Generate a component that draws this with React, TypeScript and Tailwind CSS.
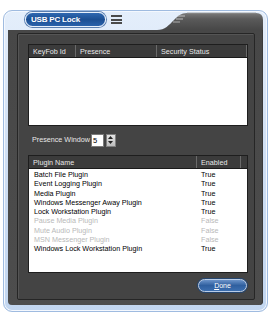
import React from "react";

const font = { fontFamily: '"Liberation Sans", Arial, sans-serif' };

function Header({ cols }: { cols: { label: string; w: string }[] }) {
  return (
    <div className="flex h-[13px] bg-[#3b3b3b] border-b border-[#1a1a1a]">
      {cols.map((c, i) => (
        <div
          key={i}
          className={`${c.w} h-full border-r border-[#6a6a6a] text-[#e8e8e8] text-[7.2px] leading-[13px] pl-[4px] whitespace-nowrap overflow-hidden`}
        >
          {c.label}
        </div>
      ))}
      <div className="flex-1 h-full" />
    </div>
  );
}

const plugins: [string, string, boolean][] = [
  ["Batch File Plugin", "True", true],
  ["Event Logging Plugin", "True", true],
  ["Media Plugin", "True", true],
  ["Windows Messenger Away Plugin", "True", true],
  ["Lock Workstation Plugin", "True", true],
  ["Pause Media Plugin", "False", false],
  ["Mute Audio Plugin", "False", false],
  ["MSN Messenger Plugin", "False", false],
  ["Windows Lock Workstation Plugin", "True", true],
];

export default function App() {
  return (
    <div className="w-[271px] h-[320px] bg-white pt-[10px] pl-[3px]" style={font}>
      <div className="w-[265px] h-[302px] rounded-[9px] border border-[#9fbbe0] bg-gradient-to-b from-[#e4eefb] via-[#cfdff4] to-[#c2d6f0] px-[4px] pb-[6px] flex flex-col shadow-[inset_0_0_0_1px_#f4f8fe]">
        {/* title row */}
        <div className="h-[19px] flex items-start shrink-0">
          <div className="ml-[17px] mt-[1px] w-[81px] h-[15px] rounded-full border border-[#e8f0fb] bg-gradient-to-b from-[#2f68b1] via-[#1c4f93] to-[#2a62ab] shadow-[0_0_0_1px_#5b7fb0] flex items-center pl-[5px]">
            <span className="text-white font-bold text-[8px] leading-none tracking-[-0.2px]">USB PC Lock</span>
          </div>
          <div className="ml-[5px] mt-[4px] flex flex-col gap-[1.5px]">
            <div className="w-[11px] h-[2px] bg-[#4a4a4a]" />
            <div className="w-[11px] h-[2px] bg-[#4a4a4a]" />
            <div className="w-[11px] h-[2px] bg-[#4a4a4a]" />
          </div>
          <div className="flex-1" />
          <svg width="106" height="19" viewBox="0 0 106 19" className="block">
            <defs>
              <linearGradient id="tab" x1="0" y1="0" x2="0" y2="1">
                <stop offset="0" stopColor="#7a7a7a" />
                <stop offset="0.35" stopColor="#5a5a5a" />
                <stop offset="1" stopColor="#474747" />
              </linearGradient>
            </defs>
            <path d="M0 19 C8 19 12 14 17 9 C21 5 24 2 30 2 L99 2 Q106 2 106 9 L106 19 Z" fill="url(#tab)" />
            <path d="M30 2 L99 2" stroke="#9a9a9a" strokeWidth="0.8" />
            <line x1="21" y1="5" x2="28" y2="5" stroke="#c8c8c8" strokeWidth="0.9" />
            <line x1="19" y1="8" x2="26" y2="8" stroke="#c8c8c8" strokeWidth="0.9" />
            <line x1="16" y1="11" x2="23" y2="11" stroke="#b8b8b8" strokeWidth="0.9" />
          </svg>
        </div>
        {/* dark panel */}
        <div className="flex-1 bg-gradient-to-b from-[#474747] to-[#4d4d4d] rounded-b-[4px] pt-[3px] pl-[9px] shadow-[inset_-1px_0_0_#3a3a3a]">
          <div className="w-[238px] h-[267px] border border-[#262626] bg-[#444444] rounded-[2px] pt-[10px] pl-[10px] flex flex-col shadow-[inset_1px_1px_0_#555]">
            {/* table 1 */}
            <div className="w-[220px] border border-[#1e1e1e]">
              <Header
                cols={[
                  { label: "KeyFob Id", w: "w-[47px]" },
                  { label: "Presence", w: "w-[81px]" },
                  { label: "Security Status", w: "w-[90px]" },
                ]}
              />
              <div className="h-[67px] bg-white" />
            </div>
            {/* presence window */}
            <div className="mt-[7px] h-[14px] flex items-center">
              <span className="pl-[4px] text-[7.2px] text-[#e8e8e8] leading-none">Presence Window</span>
              <div className="ml-[1px] w-[13px] h-[13px] bg-white border border-[#7a7a7a] text-[7.5px] leading-[11px] pl-[1px] text-black">5</div>
              <div className="ml-[2px] w-[10px] h-[13px] bg-gradient-to-b from-[#e4e4e4] to-[#bdbdbd] border border-[#808080] flex flex-col items-center justify-center gap-[2px]">
                <svg width="5" height="3" viewBox="0 0 5 3"><path d="M0 3 L2.5 0 L5 3 Z" fill="#222" /></svg>
                <svg width="5" height="3" viewBox="0 0 5 3"><path d="M0 0 L2.5 3 L5 0 Z" fill="#222" /></svg>
              </div>
            </div>
            {/* plugin table */}
            <div className="mt-[8px] w-[220px] border border-[#1e1e1e]">
              <Header
                cols={[
                  { label: "Plugin Name", w: "w-[168px]" },
                  { label: "Enabled", w: "w-[44px]" },
                ]}
              />
              <div className="h-[103px] bg-white pt-[1px]">
                {plugins.map(([name, val, on], i) => (
                  <div key={i} className={`flex h-[9.3px] text-[7.2px] leading-[9.3px] ${on ? "text-black" : "text-[#b9b9b9]"}`}>
                    <div className="w-[168px] pl-[5px] whitespace-nowrap">{name}</div>
                    <div className="pl-[4px]">{val}</div>
                  </div>
                ))}
              </div>
            </div>
            {/* done */}
            <div className="mt-[6px] w-[220px] flex justify-end pr-[1px]">
              <div className="w-[49px] h-[13px] rounded-full border border-[#b9cde8] bg-gradient-to-b from-[#6b93c9] via-[#2f5f9f] to-[#3d6fb0] shadow-[0_0_0_1px_#26466f] flex items-center justify-center">
                <span className="text-[7px] text-white leading-none"><span className="underline">D</span>one</span>
              </div>
            </div>
          </div>
        </div>
      </div>
    </div>
  );
}
